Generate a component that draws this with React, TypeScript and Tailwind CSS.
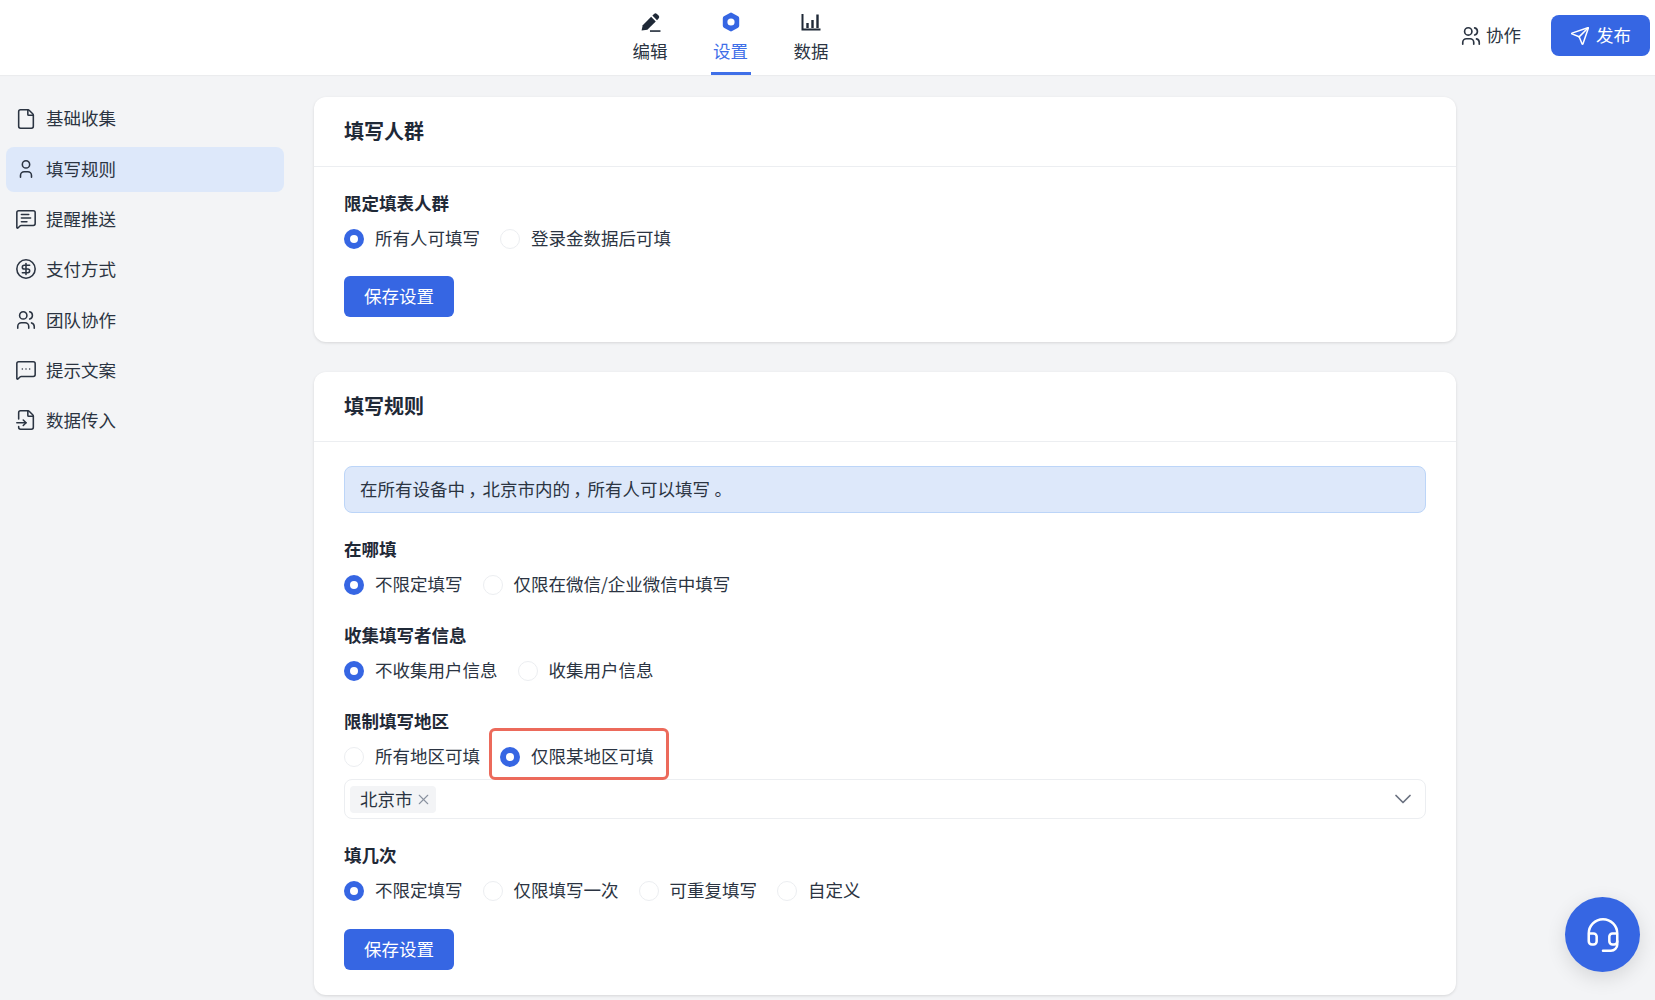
import { ChevronDown, CircleDollarSign, File, FileInput, Headset, MessageSquareMore, MessageSquareText, Send, X } from 'lucide-react'
import { TbUser, TbUsers } from 'react-icons/tb'

const navItems = [
  { label: '基础收集', icon: File },
  { label: '填写规则', icon: TbUser, active: true },
  { label: '提醒推送', icon: MessageSquareText },
  { label: '支付方式', icon: CircleDollarSign },
  { label: '团队协作', icon: TbUsers },
  { label: '提示文案', icon: MessageSquareMore },
  { label: '数据传入', icon: FileInput },
]

function PenIcon() {
  return (
    <svg width="21" height="21" viewBox="0 0 20 20" fill="#1f2937">
      <path d="M1.5 17.5 2.6 12.6 10.6 4.6 15 9 7 17z" />
      <path d="M11.8 3.4 13.4 1.8a1.9 1.9 0 0 1 2.7 0l1.6 1.6a1.9 1.9 0 0 1 0 2.7L16.2 7.8z" />
      <rect x="9.5" y="17.4" width="10" height="1.5" />
    </svg>
  )
}

function HexIcon() {
  return (
    <svg width="20" height="20" viewBox="0 0 20 20">
      <path
        fill="#3666e3"
        fillRule="evenodd"
        d="M8.9.9a2.2 2.2 0 0 1 2.2 0l6 3.4a2.2 2.2 0 0 1 1.1 1.9v7.6a2.2 2.2 0 0 1-1.1 1.9l-6 3.4a2.2 2.2 0 0 1-2.2 0l-6-3.4a2.2 2.2 0 0 1-1.1-1.9V6.2a2.2 2.2 0 0 1 1.1-1.9zM10 6.4a3.6 3.6 0 1 0 0 7.2 3.6 3.6 0 0 0 0-7.2z"
      />
    </svg>
  )
}

function BarsIcon() {
  return (
    <svg width="20" height="20" viewBox="0 0 20 20" fill="none" stroke="#1f2937" strokeWidth="2">
      <path d="M1.5 2v15.6h18" />
      <path strokeWidth="2.4" d="M6.5 16v-5M11.5 16V8M16.5 16V2.5" />
    </svg>
  )
}

function Radio({ label, checked, marked }: { label: string; checked?: boolean; marked?: boolean }) {
  return (
    <label className="relative flex h-[28px] items-center gap-[11px]">
      {checked ? (
        <span className="flex h-5 w-5 items-center justify-center rounded-full bg-[#3666e3]">
          <span className="h-2 w-2 rounded-full bg-white" />
        </span>
      ) : (
        <span className="h-5 w-5 rounded-full border border-[#eceef1] bg-white" />
      )}
      <span className="pb-[2px] text-[17.5px] text-[#2b3442]">{label}</span>
      {marked && (
        <span className="absolute top-[-15px] right-[-15px] bottom-[-9px] left-[-11px] rounded-md border-[3px] border-[#ec6a5b]" />
      )}
    </label>
  )
}

function Field({ title, children }: { title: string; children: React.ReactNode }) {
  return (
    <div>
      <div className="h-6 text-[17.5px] leading-6 font-semibold text-[#1f2937]">{title}</div>
      <div className="mt-[10px] flex gap-5">{children}</div>
    </div>
  )
}

function SaveButton() {
  return (
    <button className="flex h-[41px] w-[110px] items-center justify-center rounded-md bg-[#3666e3] text-[17.5px] text-white">
      保存设置
    </button>
  )
}

function Card({ title, children }: { title: string; children: React.ReactNode }) {
  return (
    <section className="rounded-xl bg-white shadow-[0_1px_3px_rgba(0,0,0,0.12)]">
      <div className="flex h-[70px] items-center border-b border-[#eceef1] px-[30px] pb-[2px] text-[20px] font-semibold text-[#1f2937]">
        {title}
      </div>
      <div className="px-[30px]">{children}</div>
    </section>
  )
}

function Mark({ children }: { children: string }) {
  return <span className="inline-block w-[17.5px] text-center [font-feature-settings:'palt']">{children}</span>
}

export default function App() {
  return (
    <div className="relative h-screen overflow-hidden bg-[#f3f4f6] font-['Noto_Sans_CJK_SC',sans-serif] text-[#1f2937]">
      <header className="flex h-[75px] items-center bg-white pr-[5px] pl-[630px] shadow-[0_1px_1px_rgba(0,0,0,0.03)]">
        <nav className="flex h-full gap-[40.5px]">
          <div className="flex w-10 flex-col items-center pt-3 text-[#2b3442]">
            <PenIcon />
            <span className="mt-[6px] text-[17.5px] leading-6">编辑</span>
          </div>
          <div className="flex w-10 flex-col items-center border-b-[3px] border-[#3f6fe8] pt-3 text-[#3f6fe8]">
            <HexIcon />
            <span className="mt-[7px] text-[17.5px] leading-6">设置</span>
          </div>
          <div className="flex w-10 flex-col items-center pt-3 text-[#2b3442]">
            <BarsIcon />
            <span className="mt-[7px] text-[17.5px] leading-6">数据</span>
          </div>
        </nav>
        <div className="ml-auto flex items-center gap-[30px] pb-1">
          <button className="flex items-center gap-1 text-[17.5px] text-[#2b3442]">
            <TbUsers size={22} strokeWidth={1.8} />
            协作
          </button>
          <button className="flex h-[41px] w-[99px] items-center justify-center gap-[6px] rounded-lg bg-[#3666e3] text-[17.5px] text-white">
            <Send size={20} strokeWidth={1.8} />
            发布
          </button>
        </div>
      </header>

      <div className="flex">
        <aside className="flex w-[314px] shrink-0 flex-col gap-[5.3px] pt-[22px] pr-[30px] pl-[6px]">
          {navItems.map((item) => (
            <div
              key={item.label}
              className={`flex h-[45px] items-center gap-[9px] rounded-lg pb-[2px] pl-[9px] text-[17.5px] text-[#2b3442] ${
                item.active ? 'bg-[#dde8fa]' : ''
              }`}
            >
              <item.icon size={22} strokeWidth={1.7} />
              {item.label}
            </div>
          ))}
        </aside>

        <main className="flex w-[1142px] flex-col gap-[30px] pt-[22px]">
          <Card title="填写人群">
            <div className="pt-[24px] pb-[25px]">
              <Field title="限定填表人群">
                <Radio label="所有人可填写" checked />
                <Radio label="登录金数据后可填" />
              </Field>
              <div className="mt-[23px]">
                <SaveButton />
              </div>
            </div>
          </Card>

          <Card title="填写规则">
            <div className="pt-[24px] pb-[25px]">
              <div className="flex h-[47px] items-center rounded-lg border border-[#bcd5f8] bg-[#dde8fa] px-[15px] text-[17.5px] text-[#2b3442]">
                <p>
                  在所有设备中<Mark>，</Mark>北京市内的<Mark>，</Mark>所有人可以填写<Mark>。</Mark>
                </p>
              </div>
              <div className="mt-6 flex flex-col gap-6">
                <Field title="在哪填">
                  <Radio label="不限定填写" checked />
                  <Radio label="仅限在微信/企业微信中填写" />
                </Field>
                <Field title="收集填写者信息">
                  <Radio label="不收集用户信息" checked />
                  <Radio label="收集用户信息" />
                </Field>
                <div>
                  <Field title="限制填写地区">
                    <Radio label="所有地区可填" />
                    <Radio label="仅限某地区可填" checked marked />
                  </Field>
                  <div className="mt-2 flex h-10 items-center justify-between rounded-lg border border-[#eceef1] pr-2 pl-[5px]">
                    <span className="flex h-[27px] items-center gap-[2px] rounded bg-[#f3f4f6] pr-1 pl-[10px] text-[17.5px] text-[#2b3442]">
                      北京市
                      <X size={17} strokeWidth={1.5} className="text-[#8a92a0]" />
                    </span>
                    <ChevronDown size={28} strokeWidth={1.5} className="text-[#6b7280]" />
                  </div>
                </div>
                <Field title="填几次">
                  <Radio label="不限定填写" checked />
                  <Radio label="仅限填写一次" />
                  <Radio label="可重复填写" />
                  <Radio label="自定义" />
                </Field>
              </div>
              <div className="mt-6">
                <SaveButton />
              </div>
            </div>
          </Card>
        </main>
      </div>

      <button className="absolute top-[897px] left-[1565px] flex h-[75px] w-[75px] items-center justify-center rounded-full bg-[#3666e3] text-white shadow-[0_6px_20px_rgba(0,0,0,0.12)]">
        <Headset size={38} strokeWidth={1.6} />
      </button>
    </div>
  )
}
